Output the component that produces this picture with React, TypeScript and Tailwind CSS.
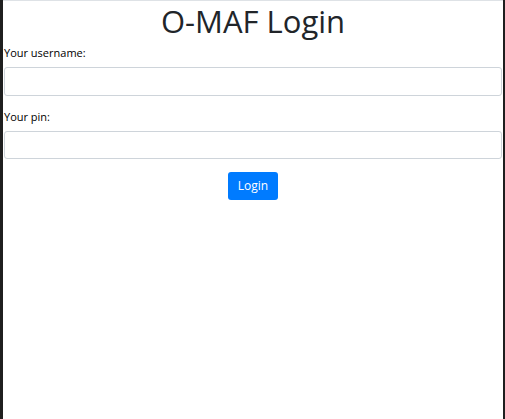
export default function App() {
  return (
    <div className="flex h-[419px] w-[505px] bg-[#1f1f1f] font-['Open_Sans',sans-serif] text-[#212529]">
      <div className="w-[3px] shrink-0 bg-[#1f1f1f]" />
      <main className="flex w-[500px] shrink-0 flex-col border-t border-[#dee2e6] bg-white">
        <h1 className="mt-[1px] text-center text-[31px] leading-[38px] font-normal">O-MAF Login</h1>
        <form className="flex flex-col px-[1px]">
          <label htmlFor="username" className="mt-[5px] text-[11px] leading-[15px] text-black">
            Your username:
          </label>
          <input
            id="username"
            type="text"
            className="mt-[7px] h-[29px] w-full rounded-[3px] border border-[#ced4da] bg-white px-2 text-[13px] outline-none"
          />
          <label htmlFor="pin" className="mt-[13px] text-[11px] leading-[15px] text-black">
            Your pin:
          </label>
          <input
            id="pin"
            type="password"
            className="mt-[7px] h-[28px] w-full rounded-[3px] border border-[#ced4da] bg-white px-2 text-[13px] outline-none"
          />
          <div className="mt-[13px] flex justify-center">
            <button
              type="button"
              className="h-[28px] rounded-[3px] bg-[#007bff] px-[10px] text-[12px] text-white"
            >
              Login
            </button>
          </div>
        </form>
      </main>
      <div className="w-[2px] shrink-0 bg-[#1f1f1f]" />
    </div>
  );
}
